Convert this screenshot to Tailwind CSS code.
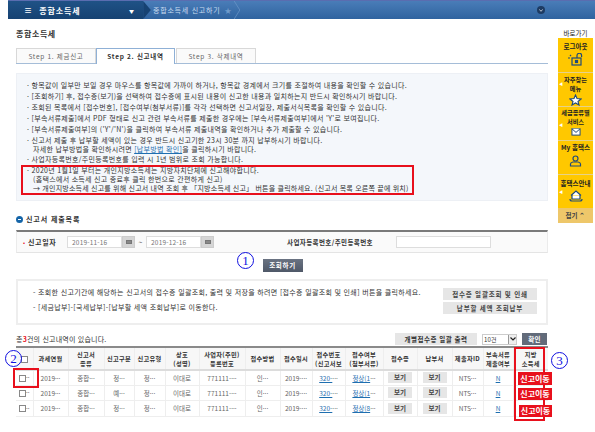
<!DOCTYPE html>
<html lang="ko">
<head>
    <meta charset="UTF-8">
    <title>종합소득세</title>
    <script src="https://cdn.jsdelivr.net/npm/@tailwindcss/browser@4"></script>
</head>
<body class="bg-white">
<div class="relative w-[595px] h-[432px] overflow-hidden font-['Noto_Sans_CJK_KR','Liberation_Sans',sans-serif] text-[7px] leading-[11px] text-[#333]">

    <!-- top bar -->
    <div class="ml-2 h-[19px] flex items-center border-t border-[#5a6db0] bg-gradient-to-b from-[#4a7db8] to-[#2f639f] text-white">
        <div class="w-[135px] h-full flex items-center justify-between pl-4 pr-[8px] bg-gradient-to-b from-[#1f5286] to-[#164272] font-bold text-[8px] tracking-[0.9px]">
            <span>≡&nbsp;&nbsp;종합소득세</span>
            <span class="text-[5px]">▼</span>
        </div>
        <svg class="w-[8px] h-full text-[#164272]" viewBox="0 0 8 19"><path d="M0 0 L8 9.5 L0 19 Z" fill="currentColor"/></svg>
        <span class="ml-[2px] text-[7px] text-[#c9dcf0] tracking-[0.75px]">종합소득세 신고하기</span>
        <span class="ml-1 text-[7px] text-[#6f9aca]">★</span>
        <svg class="ml-[3px] w-[6px] h-full" viewBox="0 0 6 19" fill="none" stroke="#6f9aca" stroke-width="0.7"><path d="M0 0 L6 9.5 L0 19"/></svg>
        <div class="ml-auto mr-[50px] w-[8px] h-[8px] rounded-full bg-[#1d3b63] flex items-center justify-center">
            <svg class="w-[4px] h-[3px]" viewBox="0 0 4 3" fill="none" stroke="#fff" stroke-width="0.7"><path d="M0.3 0.4 L2 2.3 L3.7 0.4"/></svg>
        </div>
    </div>

    <div class="flex">
        <!-- main -->
        <div class="w-[548px] pl-4 shrink-0">
            <h1 class="mt-[9px] h-[12px] text-[8px] leading-[12px] font-bold text-[#333] tracking-[0.6px]">종합소득세</h1>

            <div class="mt-[8px] h-[16px] flex border-b border-[#a5bdd8] text-[6.5px] text-[#666]">
                <div class="w-[80px] h-[15px] flex items-center justify-center border border-[#d8d8d8] border-b-0 bg-[#fafafa] tracking-[0.7px]">Step 1. 제금신고</div>
                <div class="w-[79px] h-[16px] flex items-center justify-center border border-[#8fb0d6] border-b-0 bg-white font-bold text-[#333] tracking-[0.7px]">Step 2. 신고내역</div>
                <div class="w-[80px] h-[15px] ml-px flex items-center justify-center border border-[#d8d8d8] border-b-0 bg-[#fafafa] tracking-[0.7px]">Step 3. 삭제내역</div>
            </div>

            <!-- guide box -->
            <div class="mt-[9px] h-[128px] pt-[6px] pl-[10px] bg-[#f4f7fb] border border-[#edf0f5] tracking-[0.3px] relative whitespace-nowrap">
                <p>· 항목값이 일부만 보일 경우 마우스를 항목값에 가까이 하거나, 항목값 경계에서 크기를 조절하여 내용을 확인할 수 있습니다.</p>
                <p>· [조회하기] 후, 접수증(보기)을 선택하여 접수증에 표시된 내용이 신고한 내용과 일치하는지 반드시 확인하시기 바랍니다.</p>
                <p>· 조회된 목록에서 [접수번호], [접수여부(첨부서류)]를 각각 선택하면 신고서일장, 제출서식목록을 확인할 수 있습니다.</p>
                <p>· [부속서류제출]에서 PDF 형태로 신고 관련 부속서류를 제출한 경우에는 [부속서류제출여부]에서 'Y'로 보여집니다.</p>
                <p>· [부속서류제출여부]의 ('Y'/'N')을 클릭하여 부속서류 제출내역을 확인하거나 추가 제출할 수 있습니다.</p>
                <p>· 신고서 제출 후 납부할 세액이 있는 경우 반드시 신고기한 23시 30분 까지 납부하시기 바랍니다.</p>
                <p class="pl-[6px] leading-[6px]">자세한 납부방법을 확인하시려면 <span class="text-[#1f6fb0] underline">[납부방법 확인]</span>을 클릭하시기 바랍니다.</p>
                <p class="mt-[2px]">· 사업자등록번호/주민등록번호를 입력 시 1년 범위로 조회 가능합니다.</p>
                <p>· 2020년 1월1일 부터는 개인지방소득세는 지방자치단체에 신고해야합니다.</p>
                <p class="pl-[6px] leading-[6px]">(홈택스에서 소득세 신고 종료후 클릭 한번으로 간편하게 신고)</p>
                <p class="pl-[6px] leading-[12px] tracking-[0.2px]">→ 개인지방소득세 신고를 위해 신고서 내역 조회 후 「지방소득세 신고」 버튼을 클릭하세요. (신고서 목록 오른쪽 끝에 위치)</p>
                <div class="absolute left-[4px] top-[91px] w-[393px] h-[30px] border-2 border-[#e8101c]"></div>
            </div>

            <!-- section title -->
            <div class="mt-[12px] h-[12px] flex items-center gap-[3px] text-[7px] font-bold tracking-[0.9px]">
                <span class="w-[7px] h-[7px] rounded-full bg-[#1565a8] border-2 border-[#1565a8] flex items-center justify-center"><span class="block w-[3px] h-px bg-white"></span></span>
                <span>신고서 제출목록</span>
            </div>

            <!-- search form -->
            <div class="mt-[5px] h-[23px] flex items-center border-t-2 border-[#7a7a7a] border-x border-b border-x-[#ebebeb] border-b-[#e4e4e4] bg-[#fafafa]">
                <span class="ml-[6px] text-[#e8101c] text-[6px]">•</span>
                <span class="ml-[3px] w-[38px] font-bold tracking-[0.6px]">신고일자</span>
                <span class="ml-[1px] w-[55px] h-[12px] flex items-center pl-[4px] bg-white border border-[#ddd] text-[#777] text-[6.5px] tracking-[0.2px]">2019-11-16</span>
                <span class="w-[13px] h-[12px] flex items-center justify-center bg-[#d5d5d5] border border-[#ccc]"><span class="block w-[6px] h-[4px] bg-[#888] border border-[#777]"></span></span>
                <span class="w-[11px] text-center text-[#666]">~</span>
                <span class="w-[55px] h-[12px] flex items-center pl-[4px] bg-white border border-[#ddd] text-[#777] text-[6.5px] tracking-[0.2px]">2019-12-16</span>
                <span class="w-[13px] h-[12px] flex items-center justify-center bg-[#d5d5d5] border border-[#ccc]"><span class="block w-[6px] h-[4px] bg-[#888] border border-[#777]"></span></span>
                <span class="ml-[73px] w-[97px] font-bold text-[6.5px] tracking-[0.4px] whitespace-nowrap">사업자등록번호/주민등록번호</span>
                <span class="ml-[12px] w-[95px] h-[12px] bg-white border border-[#ddd]"></span>
            </div>

            <div class="mt-[6px] h-[13px] flex justify-center">
                <span class="ml-[1px] w-[40px] h-[13px] flex items-center justify-center bg-gradient-to-b from-[#6a7382] to-[#4f5868] text-white text-[6.5px] font-bold tracking-[0.7px]">조회하기</span>
            </div>

            <!-- notice box -->
            <div class="mt-[7px] h-[46px] flex border-2 border-[#eeeeee]">
                <div class="flex-1 pt-[3px] pl-[15px] tracking-[0.33px] whitespace-nowrap">
                    <p class="leading-[16px]">- 조회한 신고기간에 해당하는 신고서의 접수증 일괄조회, 출력 및 저장을 하려면 [접수증 일괄조회 및 인쇄] 버튼을 클릭하세요.</p>
                    <p class="leading-[14px]">- [세금납부]-[국세납부]-[납부할 세액 조회납부]로 이동한다.</p>
                </div>
                <div class="w-[94px] mr-[9px] pt-[7px] flex flex-col gap-[2px] text-[6.5px] font-bold text-[#444] tracking-[0.8px] shrink-0">
                    <span class="h-[12px] flex items-center justify-center bg-[#e6e6e6] whitespace-nowrap">접수증 일괄조회 및 인쇄</span>
                    <span class="h-[12px] flex items-center justify-center bg-[#e6e6e6] whitespace-nowrap">납부할 세액 조회납부</span>
                </div>
            </div>

            <!-- list head -->
            <div class="mt-[7px] h-[14px] flex items-center tracking-[0.2px]">
                <span>총<b class="text-[#e8101c]">3</b>건의 신고내역이 있습니다.</span>
                <span class="ml-auto w-[82px] h-[12px] flex items-center justify-center bg-[#e6e6e6] text-[6.5px] font-bold tracking-[0.5px] whitespace-nowrap">개별접수증 일괄 출력</span>
                <span class="ml-[5px] w-[35px] h-[11px] flex items-center justify-between pl-[1px] bg-white border border-[#ccc] text-[6px]">10건<span class="w-[8px] h-full flex items-center justify-center bg-[#eee] border-l border-[#999]"><svg class="w-[6px] h-[4px]" viewBox="0 0 6 4" fill="none" stroke="#222" stroke-width="1.2"><path d="M0.5 0.5 L3 3 L5.5 0.5"/></svg></span></span>
                <span class="ml-[5px] mr-[1px] w-[25px] h-[12px] flex items-center justify-center bg-[#626b7a] text-white text-[6.5px] font-bold">확인</span>
            </div>

            <!-- result table -->
            <table class="w-[532px] table-fixed border-collapse border-t-2 border-[#8a8a8a] text-center text-[6.5px] leading-[8px]">
                <colgroup>
                    <col class="w-[17px]"><col class="w-[35px]"><col class="w-[36px]"><col class="w-[30px]"><col class="w-[31px]">
                    <col class="w-[34px]"><col class="w-[46px]"><col class="w-[35px]"><col class="w-[32px]"><col class="w-[33px]">
                    <col class="w-[38px]"><col class="w-[34px]"><col class="w-[35px]"><col class="w-[31px]"><col class="w-[30px]"><col class="w-[35px]">
                </colgroup>
                <thead class="bg-[#f7f7f7] font-bold text-[6.2px] leading-[9px]">
                    <tr class="h-[23px] border-b-2 border-[#dcdcdc] [&>th]:border-l [&>th]:border-[#eeeeee] [&>th]:font-bold [&>th]:whitespace-nowrap [&>th]:tracking-[0.35px]">
                        <th class="!border-l-0"><span class="inline-block w-[7px] h-[7px] bg-white border border-[#888] align-middle"></span></th>
                        <th>과세연월</th>
                        <th>신고서<br>종류</th>
                        <th>신고구분</th>
                        <th>신고유형</th>
                        <th>상호<br>(성명)</th>
                        <th>사업자(주민)<br>등록번호</th>
                        <th>접수방법</th>
                        <th>접수일시</th>
                        <th>접수번호<br>(신고서보</th>
                        <th>접수여부<br>(첨부서류)</th>
                        <th>접수증</th>
                        <th>납부서</th>
                        <th>제출자ID</th>
                        <th>부속서류<br>제출여부</th>
                        <th>지방<br>소득세</th>
                    </tr>
                </thead>
                <tbody class="text-[#666]">
                    <tr class="h-[15px] border-b border-[#eeeeee] [&>td]:border-l [&>td]:border-[#eeeeee] [&>td]:whitespace-nowrap">
                        <td class="!border-l-0"><span class="inline-block w-[7px] h-[7px] bg-white border border-[#888] align-middle"></span>··</td>
                        <td>2019···</td><td>종합···</td><td>정···</td><td>정···</td><td>이대로</td><td>771111-···</td><td>인···</td><td>2019-···</td>
                        <td><span class="text-[#1f6fb0] underline">320-</span>···</td>
                        <td><span class="text-[#1f6fb0] underline">정상(1</span>···</td>
                        <td><span class="inline-block w-[24px] h-[11px] leading-[11px] bg-[#e6e6e6] font-bold text-[#444]">보기</span></td>
                        <td><span class="inline-block w-[24px] h-[11px] leading-[11px] bg-[#e6e6e6] font-bold text-[#444]">보기</span></td>
                        <td>NTS···</td><td><span class="text-[#1f6fb0] underline">N</span></td>
                        <td></td>
                    </tr>
                    <tr class="h-[15px] border-b border-[#eeeeee] [&>td]:border-l [&>td]:border-[#eeeeee] [&>td]:whitespace-nowrap">
                        <td class="!border-l-0"><span class="inline-block w-[7px] h-[7px] bg-white border border-[#888] align-middle"></span>··</td>
                        <td>2019···</td><td>종합···</td><td>예···</td><td>정···</td><td>이대로</td><td>771111-···</td><td>인···</td><td>2019-···</td>
                        <td><span class="text-[#1f6fb0] underline">320-</span>···</td>
                        <td><span class="text-[#1f6fb0] underline">정상(1</span>···</td>
                        <td><span class="inline-block w-[24px] h-[11px] leading-[11px] bg-[#e6e6e6] font-bold text-[#444]">보기</span></td>
                        <td><span class="inline-block w-[24px] h-[11px] leading-[11px] bg-[#e6e6e6] font-bold text-[#444]">보기</span></td>
                        <td>NTS···</td><td><span class="text-[#1f6fb0] underline">N</span></td>
                        <td></td>
                    </tr>
                    <tr class="h-[16px] border-b border-[#eeeeee] [&>td]:border-l [&>td]:border-[#eeeeee] [&>td]:whitespace-nowrap">
                        <td class="!border-l-0"><span class="inline-block w-[7px] h-[7px] bg-white border border-[#888] align-middle"></span>··</td>
                        <td>2019···</td><td>종합···</td><td>정···</td><td>정···</td><td>이대로</td><td>771111-···</td><td>인···</td><td>2019-···</td>
                        <td><span class="text-[#1f6fb0] underline">320-</span>···</td>
                        <td><span class="text-[#1f6fb0] underline">정상(8</span>···</td>
                        <td><span class="inline-block w-[24px] h-[11px] leading-[11px] bg-[#e6e6e6] font-bold text-[#444]">보기</span></td>
                        <td><span class="inline-block w-[24px] h-[11px] leading-[11px] bg-[#e6e6e6] font-bold text-[#444]">보기</span></td>
                        <td>NTS···</td><td><span class="text-[#1f6fb0] underline">N</span></td>
                        <td></td>
                    </tr>
                </tbody>
            </table>
        </div>

        <!-- quick menu -->
        <div class="ml-[10px] w-[35px] shrink-0 text-center text-[6.5px] leading-[8px] font-bold text-[#222]">
            <div class="mt-[9px] h-[10px] leading-[10px] font-normal whitespace-nowrap">바로가기</div>
            <div class="bg-[#ffc800]">
                <div class="h-[35px] pt-[4px] border-b border-[#e6d28a]">
                    <div>로그아웃</div>
                    <svg class="mx-auto mt-[3px] w-[18px] h-[13px]" viewBox="0 0 18 13" fill="none" stroke="#1f4a7a" stroke-width="1.2"><rect x="5" y="5" width="9" height="7"/><rect x="8.5" y="7.5" width="2" height="2" fill="#1f4a7a"/><path d="M10 5 V2.5 a2.3 2.3 0 0 1 4.6 0 V4"/><path d="M1 5 H3 M3 2 L4 3"/></svg>
                </div>
                <div class="relative h-[34px] pt-[2px] border-b border-[#e6d28a]">
                    <span class="absolute left-[1px] top-[7px] text-[4px] text-white">◀</span>
                    <div class="text-[6.2px] leading-[9px]">자주찾는<br>메뉴</div>
                    <svg class="mx-auto mt-[1px] w-[13px] h-[12px]" viewBox="0 0 13 12" fill="#fff" stroke="#1f4a7a" stroke-width="1.1"><path d="M6.5 1 L8 4.5 L12 5 L9 7.5 L10 11 L6.5 9 L3 11 L4 7.5 L1 5 L5 4.5 Z"/></svg>
                </div>
                <div class="relative h-[34px] pt-[1px] border-b border-[#e6d28a]">
                    <span class="absolute left-[1px] top-[14px] text-[4px] text-white">◀</span>
                    <div class="whitespace-nowrap text-[6.2px] leading-[9px]">세금종류별<br>서비스</div>
                    <svg class="mx-auto mt-[1px] w-[10px] h-[9px]" viewBox="0 0 11 10" fill="#fff" stroke="#1f4a7a" stroke-width="1.1"><rect x="1" y="2" width="9" height="7"/><path d="M1 2 L5.5 6 L10 2"/></svg>
                </div>
                <div class="h-[34px] pt-[2px] border-b border-[#e6d28a]">
                    <div>My 홈택스</div>
                    <svg class="mx-auto mt-[4px] w-[13px] h-[12px]" viewBox="0 0 13 12" fill="none" stroke="#1f4a7a" stroke-width="1.2"><circle cx="6.5" cy="3.5" r="2.5"/><path d="M1.5 11 V9 Q1.5 7.5 4 7 H9 Q11.5 7.5 11.5 9 V11 Z"/></svg>
                </div>
                <div class="relative h-[33px] pt-[4px]">
                    <span class="absolute left-[1px] top-[13px] text-[4px] text-white">◀</span>
                    <div class="whitespace-nowrap">홈택스안내</div>
                    <svg class="mx-auto mt-[3px] w-[14px] h-[12px]" viewBox="0 0 14 12" fill="#fff" stroke="#1f4a7a" stroke-width="1.2"><path d="M2 5.5 L7 1 L12 5.5 M3 5 V9 H11 V5"/><path d="M1 9 Q1 11 3 11 H11 Q13 11 13 9" fill="none"/></svg>
                </div>
                <div class="h-[15px] leading-[15px] bg-[#eec76a] text-[#444]">접기 ⌃</div>
            </div>
        </div>
    </div>

    <!-- annotation marks drawn over the capture -->
    <div class="absolute left-[237px] top-[252px] w-[17px] h-[17px] rounded-full border border-[#1010e0] flex items-center justify-center text-[#1010e0] text-[13px] font-['Liberation_Serif']">1</div>
    <div class="absolute left-[5px] top-[350px] w-[17px] h-[17px] rounded-full border border-[#1010e0] flex items-center justify-center text-[#1010e0] text-[13px] font-['Liberation_Serif']">2</div>
    <div class="absolute left-[551px] top-[352px] w-[17px] h-[17px] rounded-full border border-[#1010e0] flex items-center justify-center text-[#1010e0] text-[13px] font-['Liberation_Serif']">3</div>
    <div class="absolute left-[13px] top-[368px] w-[26px] h-[20px] border-2 border-[#e8101c]"></div>
    <div class="absolute left-[514px] top-[347px] w-[31px] h-[74px] border-2 border-[#e8101c]"></div>
    <span class="absolute left-[518px] top-[372px] w-[34px] h-[13px] bg-[#e8101c] text-white text-[8px] leading-[13px] font-bold text-center">신고이동</span>
    <span class="absolute left-[518px] top-[388px] w-[34px] h-[12px] bg-[#e8101c] text-white text-[8px] leading-[12px] font-bold text-center">신고이동</span>
    <span class="absolute left-[519px] top-[405px] w-[33px] h-[12px] bg-[#e8101c] text-white text-[8px] leading-[12px] font-bold text-center">신고이동</span>
</div>
</body>
</html>
